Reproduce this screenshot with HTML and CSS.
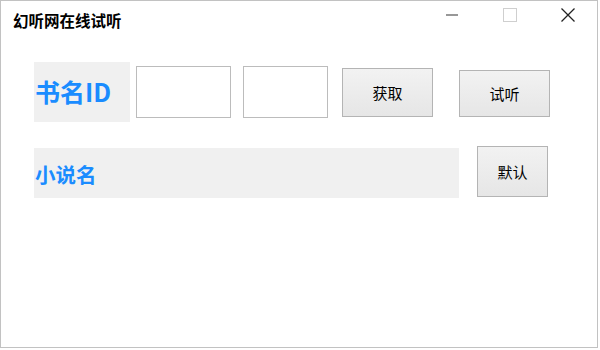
FILE: index.html
```html
<!DOCTYPE html>
<html lang="zh">
<head>
<meta charset="utf-8">
<title>幻听网在线试听</title>
<link rel="stylesheet" href="styles.css">
</head>
<body>
<div class="window">
  <div class="titlebar">
    <div class="title">幻听网在线试听</div>
    <div class="caption">
      <div class="cap-btn">
        <svg width="12" height="2" viewBox="0 0 12 2"><rect x="0" y="0.5" width="12" height="1" fill="#333"/></svg>
      </div>
      <div class="cap-btn">
        <svg width="14" height="14" viewBox="0 0 14 14"><rect x="0.5" y="0.5" width="13" height="13" fill="none" stroke="#cfcfcf"/></svg>
      </div>
      <div class="cap-btn">
        <svg width="14" height="14" viewBox="0 0 14 14"><path d="M0.5 0.5 L13.5 13.5 M13.5 0.5 L0.5 13.5" stroke="#222" stroke-width="1.3"/></svg>
      </div>
    </div>
  </div>
  <div class="content">
    <div class="row row1">
      <div class="label label-id">书名ID</div>
      <div class="input input1"></div>
      <div class="input input2"></div>
      <button class="btn btn-get">获取</button>
      <button class="btn btn-listen">试听</button>
    </div>
    <div class="row row2">
      <div class="label label-name">小说名</div>
      <button class="btn btn-default">默认</button>
    </div>
  </div>
</div>
</body>
</html>
```

FILE: styles.css
```css
html, body {
  margin: 0;
  padding: 0;
  background: #ffffff;
}
body {
  font-family: "Noto Sans CJK SC", "Noto Sans", sans-serif;
  width: 600px;
  height: 350px;
  overflow: hidden;
}
.window {
  box-sizing: border-box;
  width: 598px;
  height: 348px;
  border: 1px solid #c2c2c2;
  background: #ffffff;
  display: flex;
  flex-direction: column;
}
.titlebar {
  display: flex;
  justify-content: space-between;
  align-items: flex-start;
  height: 40px;
}
.title {
  padding-left: 12px;
  margin-top: 8px;
  font-size: 15.5px;
  font-weight: 700;
  line-height: 22px;
  color: #000;
}
.caption {
  display: flex;
}
.cap-btn {
  width: 58px;
  height: 27px;
  display: flex;
  align-items: center;
  justify-content: center;
}
.content {
  padding: 21px 0 0 33px;
  display: flex;
  flex-direction: column;
  gap: 24px;
}
.row {
  display: flex;
}
.row1 {
  align-items: center;
}
.row2 {
  align-items: flex-start;
}
.label {
  background: #f0f0f0;
  color: #1a8cff;
  font-weight: 700;
  display: flex;
  align-items: center;
  box-sizing: border-box;
  padding-left: 1px;
}
.label-id {
  width: 96px;
  height: 60px;
  font-size: 25px;
  padding-bottom: 2px;
}
.label-name {
  width: 425px;
  height: 50px;
  margin-top: 2px;
  font-size: 20.5px;
  padding-top: 1px;
}
.input {
  box-sizing: border-box;
  height: 52px;
  border: 1px solid #bcbcbc;
  background: #fff;
}
.input1 {
  width: 95px;
  margin-left: 6px;
}
.input2 {
  width: 85px;
  margin-left: 12px;
}
.btn {
  box-sizing: border-box;
  border: 1px solid #b4b4b4;
  background: linear-gradient(#f2f2f2, #e6e6e6);
  font-family: "Noto Sans CJK SC", "Noto Sans", sans-serif;
  font-size: 15px;
  color: #000;
  padding: 0;
  margin: 0;
}
.btn-get {
  width: 91px;
  height: 49px;
  margin-left: 14px;
}
.btn-listen {
  width: 91px;
  height: 47px;
  margin-left: 26px;
  margin-top: 2px;
}
.btn-default {
  width: 71px;
  height: 51px;
  margin-left: 18px;
}
```
